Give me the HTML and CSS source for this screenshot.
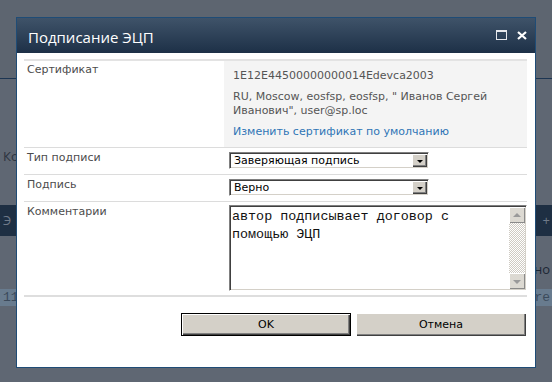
FILE: index.html
```html
<!DOCTYPE html>
<html lang="ru">
<head>
  <meta charset="UTF-8" />
  <title>Подписание ЭЦП</title>
  <link rel="stylesheet" href="styles.css">
</head>
<body>
  <!-- page behind the dialog -->
  <div class="page">
    <div class="page-top"></div>
    <div class="page-row ko"><span>Ко</span><span></span></div>
    <div class="page-band dark"><span>Э</span><span>ы &nbsp;+</span></div>
    <div class="page-row no"><span></span><span>но</span></div>
    <div class="page-band light"><span>11</span><span>ore</span></div>
  </div>

  <div class="dialog">
    <div class="titlebar">
      <div class="title">Подписание ЭЦП</div>
      <svg class="tb-icon" width="11" height="10" viewBox="0 0 11 10">
        <rect x="0.5" y="0.5" width="10" height="9" fill="none" stroke="#e6e8ec"/>
        <rect x="0" y="0" width="11" height="2" fill="#e6e8ec"/>
      </svg>
      <svg class="tb-icon close" width="10" height="9" viewBox="0 0 10 9">
        <path d="M1 1 L9 8 M9 1 L1 8" stroke="#fff" stroke-width="2.2"/>
      </svg>
    </div>

    <div class="body">
      <div class="form">
        <div class="row">
          <div class="label first">Сертификат</div>
          <div class="cert">
            <p>1E12E44500000000014Edevca2003</p>
            <p>RU, Moscow, eosfsp, eosfsp, " Иванов Сергей Иванович", user@sp.loc</p>
            <a href="#">Изменить сертификат по умолчанию</a>
          </div>
        </div>
        <div class="row">
          <div class="label">Тип подписи</div>
          <div class="field">
            <div class="select">
              <span class="select-value">Заверяющая подпись</span>
              <span class="select-btn"><i class="tri"></i></span>
            </div>
          </div>
        </div>
        <div class="row">
          <div class="label">Подпись</div>
          <div class="field">
            <div class="select">
              <span class="select-value">Верно</span>
              <span class="select-btn"><i class="tri"></i></span>
            </div>
          </div>
        </div>
        <div class="row last">
          <div class="label">Комментарии</div>
          <div class="field memo-cell">
            <div class="memo">
              <textarea>автор подписывает договор с помощью ЭЦП</textarea>
              <div class="vscroll">
                <span class="sb-btn"><i class="tri up"></i></span>
                <span class="sb-track"></span>
                <span class="sb-btn"><i class="tri"></i></span>
              </div>
            </div>
          </div>
        </div>
      </div>

      <div class="actions">
        <button class="btn default">OK</button>
        <button class="btn">Отмена</button>
      </div>
    </div>
  </div>
</body>
</html>
```

FILE: styles.css
```css
body {
  margin: 0;
  width: 552px;
  height: 382px;
  overflow: hidden;
  background: #5f6773;
  font-family: "DejaVu Sans", Verdana, sans-serif;
  font-size: 11px;
}

/* background page */
.page {
  display: flex;
  flex-direction: column;
  font-family: "Open Sans", sans-serif;
  font-size: 13px;
  color: #2c343f;
}

.page-top {
  height: 78px;
  background: #5d6570;
  border-bottom: 1px solid #1c3552;
}

.page-row,
.page-band {
  display: flex;
  justify-content: space-between;
  padding: 0 2px 0 3px;
}

.page-row.ko {
  margin-top: 68px;
  height: 20px;
}

.page-band.dark {
  margin-top: 38px;
  height: 31px;
  line-height: 31px;
  background: #1e2f43;
  color: #6f7a89;
}

.page-row.no {
  margin-top: 24px;
  height: 20px;
  color: #1c2633;
}

.page-band.light {
  margin-top: 9px;
  height: 17px;
  line-height: 17px;
  background: #687b8e;
  color: #3b4a5b;
  font-family: "Liberation Mono", monospace;
}

/* dialog */
.dialog {
  position: absolute;
  left: 16px;
  top: 17px;
  width: 520px;
  height: 351px;
  box-sizing: border-box;
  border: 1px solid #1f4c76;
  background: #fff;
  display: flex;
  flex-direction: column;
}

.titlebar {
  height: 35px;
  flex: none;
  display: flex;
  align-items: center;
  gap: 10px;
  padding: 0 8px 0 11px;
  background: linear-gradient(#3f5369, #1d3047);
  color: #fff;
}

.title {
  flex: 1;
  font-family: "Open Sans", sans-serif;
  font-size: 15px;
  padding-top: 2px;
}

.tb-icon {
  display: block;
  margin-top: -1px;
}

.body {
  padding: 6px 8px 0 7px;
}

.form {
  border-top: 2px solid #e3e3e3;
}

.row {
  display: grid;
  grid-template-columns: 200px 1fr;
  border-bottom: 1px solid #dcdcdc;
}

.row.last {
  border-bottom: 2px solid #dedede;
}

.label {
  padding: 3px 3px 0;
  line-height: 14px;
  color: #4c4c4c;
}

.label.first {
  padding-top: 2px;
}

.cert {
  background: #f4f4f4;
  padding: 8px 9px 8px;
  line-height: 14px;
  color: #555;
}

.cert p {
  margin: 0 0 7px;
}

.cert a {
  color: #2f74b6;
  text-decoration: none;
}

.field {
  padding: 4px 0 5px 5px;
}

.memo-cell {
  padding: 3px 0 4px 5px;
}

.select {
  width: 200px;
  height: 17px;
  box-sizing: border-box;
  display: flex;
  background: #fff;
  border: 1px solid;
  border-color: #808080 #fff #fff #808080;
  box-shadow: inset 1px 1px #404040, inset -1px -1px #d4d0c8;
  padding: 1px;
}

.select-value {
  flex: 1;
  padding-left: 3px;
  line-height: 14px;
  color: #000;
}

.select-btn,
.sb-btn {
  display: flex;
  align-items: center;
  justify-content: center;
  background: #d4d0c8;
  box-shadow: inset 1px 1px #fff, inset -1px -1px #404040, inset -2px -2px #808080;
}

.select-btn {
  width: 15px;
}

.tri {
  display: block;
  width: 0;
  height: 0;
  border-left: 3px solid transparent;
  border-right: 3px solid transparent;
  border-top: 3px solid #000;
  margin-top: 1px;
}

.memo {
  height: 86px;
  box-sizing: border-box;
  display: flex;
  border: 1px solid;
  border-color: #808080 #fff #fff #808080;
  box-shadow: inset 1px 1px #404040, inset -1px -1px #d4d0c8;
  padding: 1px;
}

.memo textarea {
  flex: 1;
  border: none;
  outline: none;
  resize: none;
  overflow: hidden;
  margin: 0;
  padding: 1px 1px;
  font-family: "Liberation Mono", "Courier New", monospace;
  font-size: 13.4px;
  line-height: 18px;
  color: #111;
}

.vscroll {
  width: 16px;
  display: flex;
  flex-direction: column;
}

.sb-btn {
  height: 16px;
  background: #dcd9d2;
  box-shadow: inset 1px 1px #fff, inset -1px -1px #8a8a8a;
}

.sb-btn .tri {
  border-top-color: #9a9a9a;
  border-left-width: 4px;
  border-right-width: 4px;
  border-top-width: 4px;
}

.sb-btn .tri.up {
  border-top: none;
  border-bottom: 4px solid #9a9a9a;
  margin-top: -1px;
}

.sb-track {
  flex: 1;
  background: repeating-conic-gradient(#cfcbc3 0 25%, #fff 0 50%) 0 0 / 2px 2px;
}

.actions {
  display: flex;
  justify-content: flex-end;
  gap: 5px;
  margin-top: 16px;
  padding-right: 1px;
}

.btn {
  width: 170px;
  height: 23px;
  padding: 0;
  border: none;
  background: #d4d0c8;
  box-shadow: inset 1px 1px #fff, inset -1px -1px #404040, inset -2px -2px #808080;
  font-family: "DejaVu Sans", Tahoma, sans-serif;
  font-size: 11px;
  color: #000;
}

.btn.default {
  border: 1px solid #000;
  box-shadow: inset 1px 1px #fff, inset -1px -1px #404040, inset -2px -2px #808080;
}
```
